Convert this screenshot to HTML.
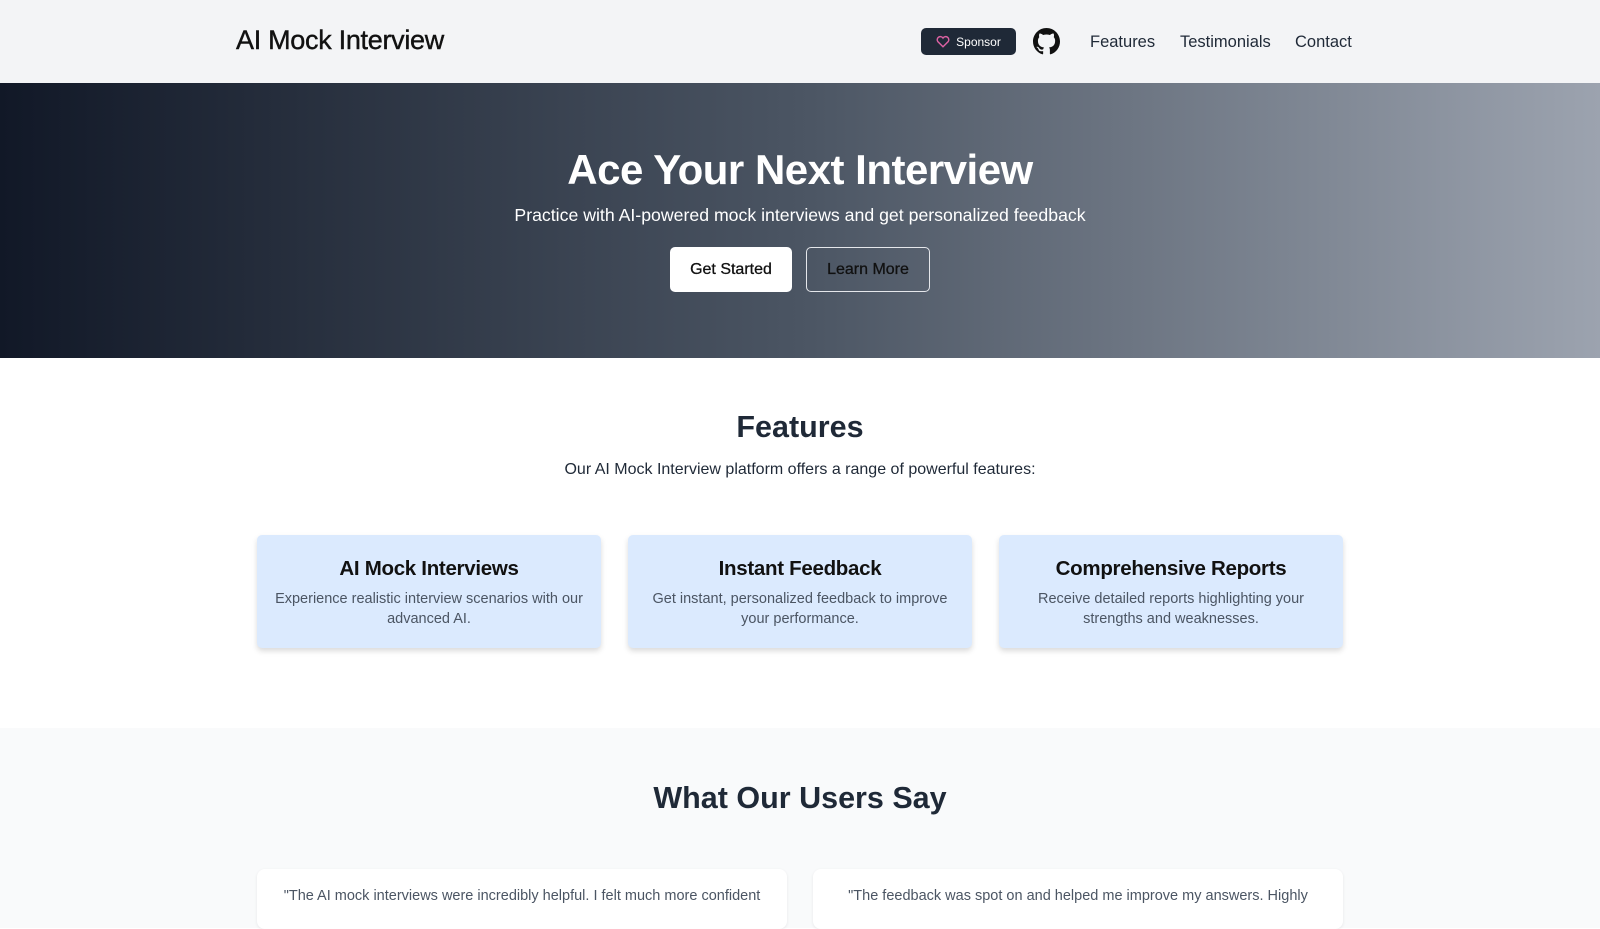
<!DOCTYPE html>
<html><head><meta charset="utf-8"><style>
*{box-sizing:border-box;margin:0;padding:0}
body{width:1600px;height:900px;overflow:hidden;font-family:"Liberation Sans",Arial,sans-serif;background:#fff;color:#1f2937}
nav{height:83px;background:#f3f4f6;position:relative}
.logo{position:absolute;left:236px;top:25px;font-size:27px;color:#111;letter-spacing:-0.3px;-webkit-text-stroke:0.4px #111}
.sp{position:absolute;left:921px;top:28px;width:95px;height:27px;background:#1f2937;border-radius:5px;color:#fff;font-size:12px;display:flex;align-items:center;justify-content:center;gap:6px}
.gh{position:absolute;left:1033px;top:28px}
.nl{position:absolute;top:33px;font-size:16.5px;color:#1f2937}
.hero{height:275px;background:linear-gradient(90deg,#111827,#4b5563 50%,#9ca3af);text-align:center;color:#fff;position:relative}
.hero h1{position:absolute;width:100%;font-size:42px;letter-spacing:-0.5px;top:63px}
.hero p{position:absolute;top:122px;width:100%;font-size:17.7px}
.b{position:absolute;top:164px;height:45px;border-radius:5px;font-size:16px;display:flex;align-items:center;justify-content:center;-webkit-text-stroke:0.3px currentColor}
.f{position:absolute;top:0;left:0;width:1600px}
h2{font-size:30.5px;text-align:center;font-weight:bold;color:#1f2937}
.card{position:absolute;top:535px;width:344px;height:113px;background:#dbeafe;border-radius:5px;box-shadow:0 3px 6px rgba(0,0,0,.15);text-align:center}
.card h3{font-size:20.5px;color:#111;margin-top:22px;font-weight:bold;letter-spacing:-0.3px}
.card p{font-size:14.5px;color:#4b5563;line-height:20px;margin:8px 18px 0}
.sec2{position:absolute;top:728px;left:0;width:1600px;height:200px;background:#f9fafb}
.t{position:absolute;top:869px;width:530px;height:60px;background:#fff;border-radius:8px;box-shadow:0 1px 3px rgba(0,0,0,.08);font-size:14.5px;color:#4b5563;padding:19px 0 0;white-space:nowrap;overflow:hidden;text-align:center}
</style></head><body>
<nav>
<div class="logo">AI Mock Interview</div>
<div class="sp"><svg width="14" height="13" viewBox="0 0 24 22"><path d="M12 20 3 11a5 5 0 0 1 9-6 5 5 0 0 1 9 6z" fill="none" stroke="#db61a2" stroke-width="2.5"/></svg>Sponsor</div>
<svg class="gh" width="27" height="27" viewBox="0 0 16 16"><path fill="#111" d="M8 0C3.58 0 0 3.580 0 8c0 3.54 2.29 6.53 5.470 7.59.4.07.55-.17.55-.38 0-.19-.01-.82-.01-1.49-2.010.37-2.53-.49-2.69-.94-.09-.23-.48-.94-.82-1.13-.28-.15-.68-.52-.01-.53.63-.01 1.08.58 1.23.82.72 1.21 1.87.87 2.33.66.07-.52.28-.87.51-1.07-1.780-.2-3.64-.89-3.64-3.95 0-.87.31-1.59.82-2.15-.08-.2-.36-1.02.08-2.12 0 0 .67-.21 2.2.82.64-.18 1.32-.27 2-.27.68 0 1.36.09 2 .27 1.53-1.04 2.2-.82 2.2-.82.44 1.1.16 1.92.08 2.12.51.56.82 1.27.82 2.15 0 3.07-1.87 3.75-3.65 3.95.29.25.54.73.54 1.48 0 1.07-.01 1.93-.01 2.2 0 .21.15.46.55.38A8.013 8.013 0 0016 8c0-4.42-3.58-8-8-8z"/></svg>
<div class="nl" style="left:1090px">Features</div>
<div class="nl" style="left:1180px">Testimonials</div>
<div class="nl" style="left:1295px">Contact</div>
</nav>
<div class="hero">
<h1>Ace Your Next Interview</h1>
<p>Practice with AI-powered mock interviews and get personalized feedback</p>
<div class="b" style="left:670px;width:122px;background:#fff;color:#111">Get Started</div>
<div class="b" style="left:806px;width:124px;border:1px solid #e5e7eb;color:#111">Learn More</div>
</div>
<div class="f">
<h2 style="position:absolute;top:410px;width:100%">Features</h2>
<div style="position:absolute;top:461px;width:100%;text-align:center;font-size:16px;color:#1f2937">Our AI Mock Interview platform offers a range of powerful features:</div>
</div>
<div class="card" style="left:257px"><h3>AI Mock Interviews</h3><p>Experience realistic interview scenarios with our advanced AI.</p></div>
<div class="card" style="left:628px"><h3>Instant Feedback</h3><p>Get instant, personalized feedback to improve your performance.</p></div>
<div class="card" style="left:999px"><h3>Comprehensive Reports</h3><p>Receive detailed reports highlighting your strengths and weaknesses.</p></div>
<div class="sec2"><h2 style="position:absolute;top:53px;width:100%">What Our Users Say</h2></div>
<div class="t" style="left:257px">"The AI mock interviews were incredibly helpful. I felt much more confident</div>
<div class="t" style="left:813px">"The feedback was spot on and helped me improve my answers. Highly</div>
</body></html>
